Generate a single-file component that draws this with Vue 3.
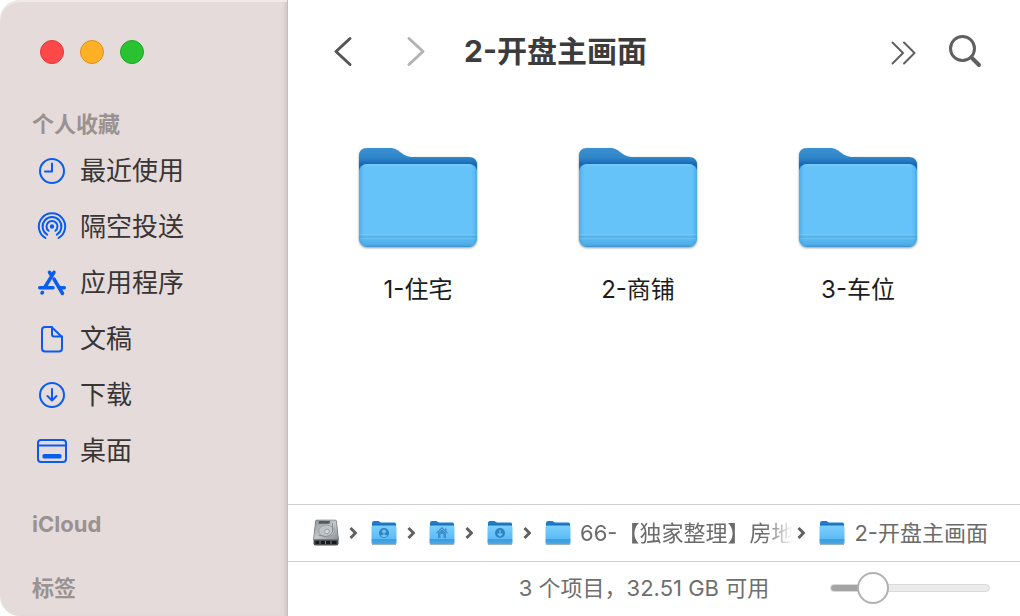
<script setup>
import { ref, computed } from 'vue'

const favorites = [
  { label: '最近使用', icon: 'clock' },
  { label: '隔空投送', icon: 'airdrop' },
  { label: '应用程序', icon: 'apps' },
  { label: '文稿', icon: 'document' },
  { label: '下载', icon: 'download' },
  { label: '桌面', icon: 'desktop' },
]
const folders = ['1-住宅', '2-商铺', '3-车位']
const parents = [
  { name: '磁盘', symbol: '#disk' },
  { name: '用户', symbol: '#small-user' },
  { name: '个人', symbol: '#small-home' },
  { name: '下载', symbol: '#small-download' },
]

const zoom = ref(21)
const fill = computed(() => `calc(16px + (100% - 32px) * ${zoom.value / 100})`)
</script>

<template>
  <div class="window">
    <svg class="defs" aria-hidden="true">
      <defs>
        <linearGradient id="back" x1="0" y1="0" x2="0" y2="1">
          <stop offset="0" stop-color="#3a90d0" />
          <stop offset=".25" stop-color="#2f86c8" />
          <stop offset=".42" stop-color="#1766b8" />
        </linearGradient>
        <linearGradient id="front" x1="0" y1="0" x2="0" y2="1">
          <stop offset="0" stop-color="#78cdfb" />
          <stop offset=".04" stop-color="#66c3fa" />
          <stop offset=".86" stop-color="#66c3fa" />
          <stop offset=".87" stop-color="#53b1ea" />
          <stop offset=".9" stop-color="#5bb9f0" />
          <stop offset=".97" stop-color="#4faeea" />
          <stop offset="1" stop-color="#3c93cd" />
        </linearGradient>
        <linearGradient id="sides">
          <stop offset="0" stop-color="#3694d2" stop-opacity=".5" />
          <stop offset=".05" stop-color="#4aaae8" stop-opacity="0" />
          <stop offset=".95" stop-color="#4aaae8" stop-opacity="0" />
          <stop offset="1" stop-color="#3694d2" stop-opacity=".5" />
        </linearGradient>
        <linearGradient id="mini" x1="0" y1="0" x2="0" y2="1">
          <stop offset="0" stop-color="#7bd0fc" />
          <stop offset=".72" stop-color="#5cbbf5" />
          <stop offset=".76" stop-color="#3d9bdc" />
          <stop offset="1" stop-color="#4ba9e5" />
        </linearGradient>
        <linearGradient id="metal" x1="0" y1="0" x2="1" y2="1">
          <stop offset="0" stop-color="#8f9498" />
          <stop offset=".5" stop-color="#c3c7ca" />
          <stop offset="1" stop-color="#8c9195" />
        </linearGradient>
        <filter id="shade" x="-10%" y="-10%" width="120%" height="125%">
          <feDropShadow dx="0" dy="1" stdDeviation="1" flood-color="#000" flood-opacity=".4" />
        </filter>
      </defs>
      <symbol id="folder" viewBox="0 0 124 108">
        <g filter="url(#shade)">
          <path fill="url(#back)" d="M3 24V9Q3 1 11 1H34C44 1 45 10 57 10H113Q121 10 121 18V40H3Z" />
          <rect x="3" y="17" width="118" height="83" rx="8" fill="url(#front)" />
        </g>
        <rect x="3" y="17" width="118" height="83" rx="8" fill="url(#sides)" />
        <path d="M4 87.5H120M4 91.5H120" stroke="#7accfa" stroke-width="1" opacity=".5" />
      </symbol>
      <symbol id="small" viewBox="0 0 26 26">
        <path fill="#1f7cc7" d="M1 3Q1 1 3 1H7Q8 1 9 2L10 2.500H23.500Q25 2.500 25 4V12H1Z" />
        <path fill="#1667b3" d="M1 4H25V8H1Z" opacity=".5" />
        <rect x="0.5" y="5.500" width="25" height="18.500" rx="1.500" fill="url(#mini)" />
        <path d="M1 24.500H25" stroke="#5a7f9b" stroke-width="1" opacity=".6" />
      </symbol>
      <symbol id="small-user" viewBox="0 0 26 26">
        <use href="#small" />
        <circle cx="13" cy="13" r="5" fill="#2f83c4" />
        <circle cx="13" cy="11.500" r="1.900" fill="#6cc4f8" />
        <path d="M9.500 15.800Q13 12.500 16.500 15.800Q13 18.500 9.500 15.800Z" fill="#6cc4f8" />
      </symbol>
      <symbol id="small-home" viewBox="0 0 26 26">
        <use href="#small" />
        <path d="M7.500 13.200L13 8L18.500 13.200" fill="none" stroke="#3d8fce" stroke-width="1.300" />
        <path d="M16 8.500H17.500V12H16ZM9 13L13 9.500L17 13V18H14.500V14H11.500V18H9Z" fill="#3d8fce" />
      </symbol>
      <symbol id="small-download" viewBox="0 0 26 26">
        <use href="#small" />
        <circle cx="13" cy="13" r="5" fill="#2f83c4" />
        <path d="M13 10V15.500M10.700 13.500L13 15.800L15.300 13.500" fill="none" stroke="#6cc4f8" stroke-width="1.300" />
      </symbol>
      <symbol id="disk" viewBox="0 0 26 28">
        <path d="M0.500 20.500L2.500 2Q2.700 1 4 1H22Q23.300 1 23.500 2L25.500 20.500V24.500Q25.500 26.500 23.500 26.500H2.500Q.5 26.500 .5 24.500Z" fill="#4c5053" />
        <path d="M0.500 20.500L2.500 2.200Q2.700 1 4 1H22Q23.300 1 23.500 2.200L25.500 20.500Z" fill="url(#metal)" stroke="#74797d" stroke-width=".6" />
        <path d="M6 2H17L16.500 4.800H5.600Z" fill="#55595d" />
        <ellipse cx="13.500" cy="12" rx="7.800" ry="6" fill="#bfc4c7" stroke="#8f9598" stroke-width=".8" />
        <circle cx="14" cy="12.500" r="2.300" fill="#d5d9dc" stroke="#8f9598" stroke-width=".8" />
        <path d="M19.500 4V13Q18 17 13 17.500L5 16" fill="none" stroke="#858b8f" stroke-width=".9" />
        <path d="M2.500 22H23.500V25H2.500Z" fill="#17191b" />
        <path d="M7 22V25M12.500 22V25M18 22V25" stroke="#84898d" stroke-width="1" />
      </symbol>
    </svg>

    <aside class="sidebar">
      <div class="lights">
        <button class="light close" type="button" aria-label="关闭"></button>
        <button class="light minimize" type="button" aria-label="最小化"></button>
        <button class="light expand" type="button" aria-label="缩放"></button>
      </div>
      <h2 class="section">个人收藏</h2>
      <nav class="favorites">
        <a v-for="item in favorites" :key="item.label" class="favorite" href="#">
          <svg class="glyph" viewBox="0 0 32 32" aria-hidden="true">
            <g v-if="item.icon === 'clock'">
              <circle cx="16" cy="16" r="12" />
              <path d="M16 8.500V16.500H9" />
            </g>
            <g v-else-if="item.icon === 'airdrop'" class="rings">
              <circle cx="16" cy="15.500" r="1.200" class="solid" />
              <path d="M12.600 19.800A5.500 5.500 0 1 1 19.400 19.800M11.200 23.600A9.400 9.400 0 1 1 20.800 23.600M9.500 27A13.200 13.200 0 1 1 22.500 27" />
            </g>
            <g v-else-if="item.icon === 'apps'" class="heavy">
              <path d="M18 5.300L9 20M13.500 5.300L15.500 8.500" />
              <path d="M18 12L26.500 26.500" />
              <path d="M3.700 20.700H17M24 20.700H28.300M6.500 25.300L6 26" />
            </g>
            <g v-else-if="item.icon === 'document'">
              <path d="M9 4H15.500L26 14V25.500Q26 28.500 23 28.500H9Q6 28.500 6 25.500V7Q6 4 9 4Z" />
              <path d="M16 4V11.500Q16 13.500 18 13.500H26" />
            </g>
            <g v-else-if="item.icon === 'download'">
              <circle cx="16" cy="16" r="12" />
              <path d="M16 10V21M11.500 17L16 21.500L20.500 17" />
            </g>
            <g v-else>
              <rect x="2" y="5" width="28" height="22" rx="3" />
              <path d="M2 10.500H30" />
              <rect x="7.500" y="20" width="17" height="2.500" rx=".500" class="solid" />
            </g>
          </svg>
          <span>{{ item.label }}</span>
        </a>
      </nav>
      <h2 class="section cloud">iCloud</h2>
      <h2 class="section tags">标签</h2>
    </aside>

    <main class="main">
      <header class="toolbar">
        <button class="tool" type="button" aria-label="后退">
          <svg width="24" height="32" viewBox="0 0 24 32"><path d="M18 3.500L4 16.500L18 29.500" stroke="#555" stroke-width="3" /></svg>
        </button>
        <button class="tool forward" type="button" aria-label="前进">
          <svg width="24" height="32" viewBox="0 0 24 32"><path d="M5 3.500L19 16.500L5 29.500" stroke="#b3b3b3" stroke-width="3" /></svg>
        </button>
        <h1 class="title">2-开盘主画面</h1>
        <button class="tool more" type="button" aria-label="更多">
          <svg width="28" height="32" viewBox="0 0 28 32"><path d="M3.500 7.500L14 18L3.500 28.500M15 7.500L25.500 18L15 28.500" stroke="#606060" stroke-width="2" /></svg>
        </button>
        <button class="tool search" type="button" aria-label="搜索">
          <svg width="36" height="36" viewBox="0 0 36 36">
            <circle cx="15.500" cy="15.500" r="12" stroke="#606060" stroke-width="3" />
            <path d="M24.500 24.500L32 32" stroke="#606060" stroke-width="4" />
          </svg>
        </button>
      </header>

      <section class="files">
        <button v-for="name in folders" :key="name" class="file" type="button">
          <svg class="folder" aria-hidden="true"><use href="#folder" /></svg>
          <span>{{ name }}</span>
        </button>
      </section>

      <nav class="path" aria-label="路径">
        <template v-for="item in parents" :key="item.symbol">
          <button class="crumb icon-only" type="button" :aria-label="item.name">
            <svg class="crumb-icon" aria-hidden="true"><use :href="item.symbol" /></svg>
          </button>
          <svg class="sep" viewBox="0 0 8 14" aria-hidden="true"><path d="M1.500 2L6.500 7L1.500 12" /></svg>
        </template>
        <button class="crumb long" type="button">
          <svg class="crumb-icon" aria-hidden="true"><use href="#small" /></svg>
          <span class="faded">66-【独家整理】房地</span>
        </button>
        <svg class="sep" viewBox="0 0 8 14" aria-hidden="true"><path d="M1.500 2L6.500 7L1.500 12" /></svg>
        <button class="crumb" type="button">
          <svg class="crumb-icon" aria-hidden="true"><use href="#small" /></svg>
          <span>2-开盘主画面</span>
        </button>
      </nav>

      <footer class="status">
        <span class="summary">3 个项目，32.51 GB 可用</span>
        <input v-model="zoom" class="slider" type="range" min="0" max="100" aria-label="图标大小" :style="{ '--fill': fill }" />
      </footer>
    </main>
  </div>
</template>

<style>
body {
  margin: 0;
  background: #fff;
}
</style>

<style scoped>
.window {
  display: grid;
  grid-template-columns: 288px minmax(0, 1fr);
  min-height: 100vh;
  font-family: Inter, "Noto Sans CJK SC", sans-serif;
  background: #fff;
}
.defs {
  position: absolute;
  width: 0;
  height: 0;
}
button {
  padding: 0;
  border: 0;
  background: none;
  font: inherit;
  color: inherit;
}
.sidebar {
  box-sizing: border-box;
  padding: 40px 32px 12px;
  background: #e5dbda;
  border-right: 1px solid #c8bebe;
  border-radius: 20px 0 0 20px;
  box-shadow: inset 0 2px 1px #f0eaea, inset -4px 0 4px -3px #c5baba;
}
.lights {
  display: flex;
  gap: 16px;
  padding-left: 8px;
}
.light {
  width: 24px;
  height: 24px;
  border: 1px solid;
  border-radius: 50%;
}
.close {
  background: #ff4848;
  border-color: #df3639;
}
.minimize {
  background: #ffb024;
  border-color: #d8921f;
}
.expand {
  background: #29c231;
  border-color: #1ea326;
}
.section {
  margin: 44px 0 0;
  font-size: 22px;
  line-height: 32px;
  font-weight: 700;
  color: #9a9191;
}
.favorites {
  display: grid;
  margin-top: 3px;
}
.favorite {
  display: flex;
  align-items: center;
  gap: 12px;
  height: 56px;
  padding-left: 4px;
  font-size: 26px;
  line-height: 32px;
  color: #393534;
  text-decoration: none;
}
.glyph {
  width: 32px;
  height: 32px;
  fill: none;
  stroke: #0a5cf0;
  stroke-width: 2;
  stroke-linecap: round;
  stroke-linejoin: round;
}
.glyph .solid {
  fill: #0a5cf0;
}
.glyph .heavy {
  stroke-width: 3.5;
}
.cloud {
  margin-top: 29px;
}
.tags {
  margin-top: 32px;
}
.main {
  display: flex;
  flex-direction: column;
}
.toolbar {
  display: flex;
  align-items: center;
  height: 102px;
  padding: 0 37px 0 44px;
}
.tool {
  display: flex;
}
.tool svg {
  fill: none;
  stroke-linecap: round;
  stroke-linejoin: round;
}
.forward {
  margin-left: 48px;
}
.title {
  margin: 0 auto 0 36px;
  font-size: 30px;
  line-height: 40px;
  font-weight: 700;
  color: #3c3c3c;
}
.search {
  margin-left: 30px;
}
.files {
  flex: 1;
  display: grid;
  grid-template-columns: repeat(auto-fill, 220px);
  align-content: start;
  padding: 45px 20px 0;
}
.file {
  display: flex;
  flex-direction: column;
  align-items: center;
  gap: 17px;
  font-size: 24px;
  line-height: 36px;
  color: #1c1c1c;
}
.folder {
  width: 124px;
  height: 108px;
}
.path {
  display: flex;
  align-items: center;
  height: 56px;
  padding: 0 30px 0 25px;
  border-top: 1px solid #cfcfcf;
  border-bottom: 1px solid #cfcfcf;
  font-size: 22px;
  line-height: 32px;
  color: #6b6b6b;
}
.crumb {
  display: flex;
  align-items: center;
  gap: 9px;
  white-space: nowrap;
}
.icon-only {
  padding-right: 6px;
}
.crumb-icon {
  flex: none;
  width: 26px;
  height: 28px;
}
.long {
  flex: 0 1 auto;
  min-width: 0;
}
.faded {
  overflow: hidden;
  mask-image: linear-gradient(to right, #000 calc(100% - 28px), transparent);
}
.sep {
  flex: none;
  width: 8px;
  height: 14px;
  margin: 0 14px 0 4px;
  fill: none;
  stroke: #606060;
  stroke-width: 3;
}
.status {
  display: grid;
  grid-template-columns: 140px minmax(0, 1fr) 160px;
  align-items: center;
  height: 52px;
  padding: 0 30px 2px;
  font-size: 22px;
  line-height: 32px;
  color: #6e6e6e;
}
.summary {
  grid-column: 2;
  text-align: center;
  white-space: nowrap;
}
.slider {
  appearance: none;
  width: 100%;
  height: 32px;
  margin: 0;
  background: none;
}
.slider::-webkit-slider-runnable-track {
  box-sizing: border-box;
  height: 8px;
  border: 1px solid #dadada;
  border-radius: 4px;
  background: linear-gradient(to right, #a5a5a5 var(--fill), #ebebeb var(--fill));
}
.slider::-webkit-slider-thumb {
  appearance: none;
  box-sizing: border-box;
  width: 32px;
  height: 32px;
  margin-top: -13px;
  border: 2px solid #b0b0b0;
  border-radius: 50%;
  background: #fff;
}
</style>
